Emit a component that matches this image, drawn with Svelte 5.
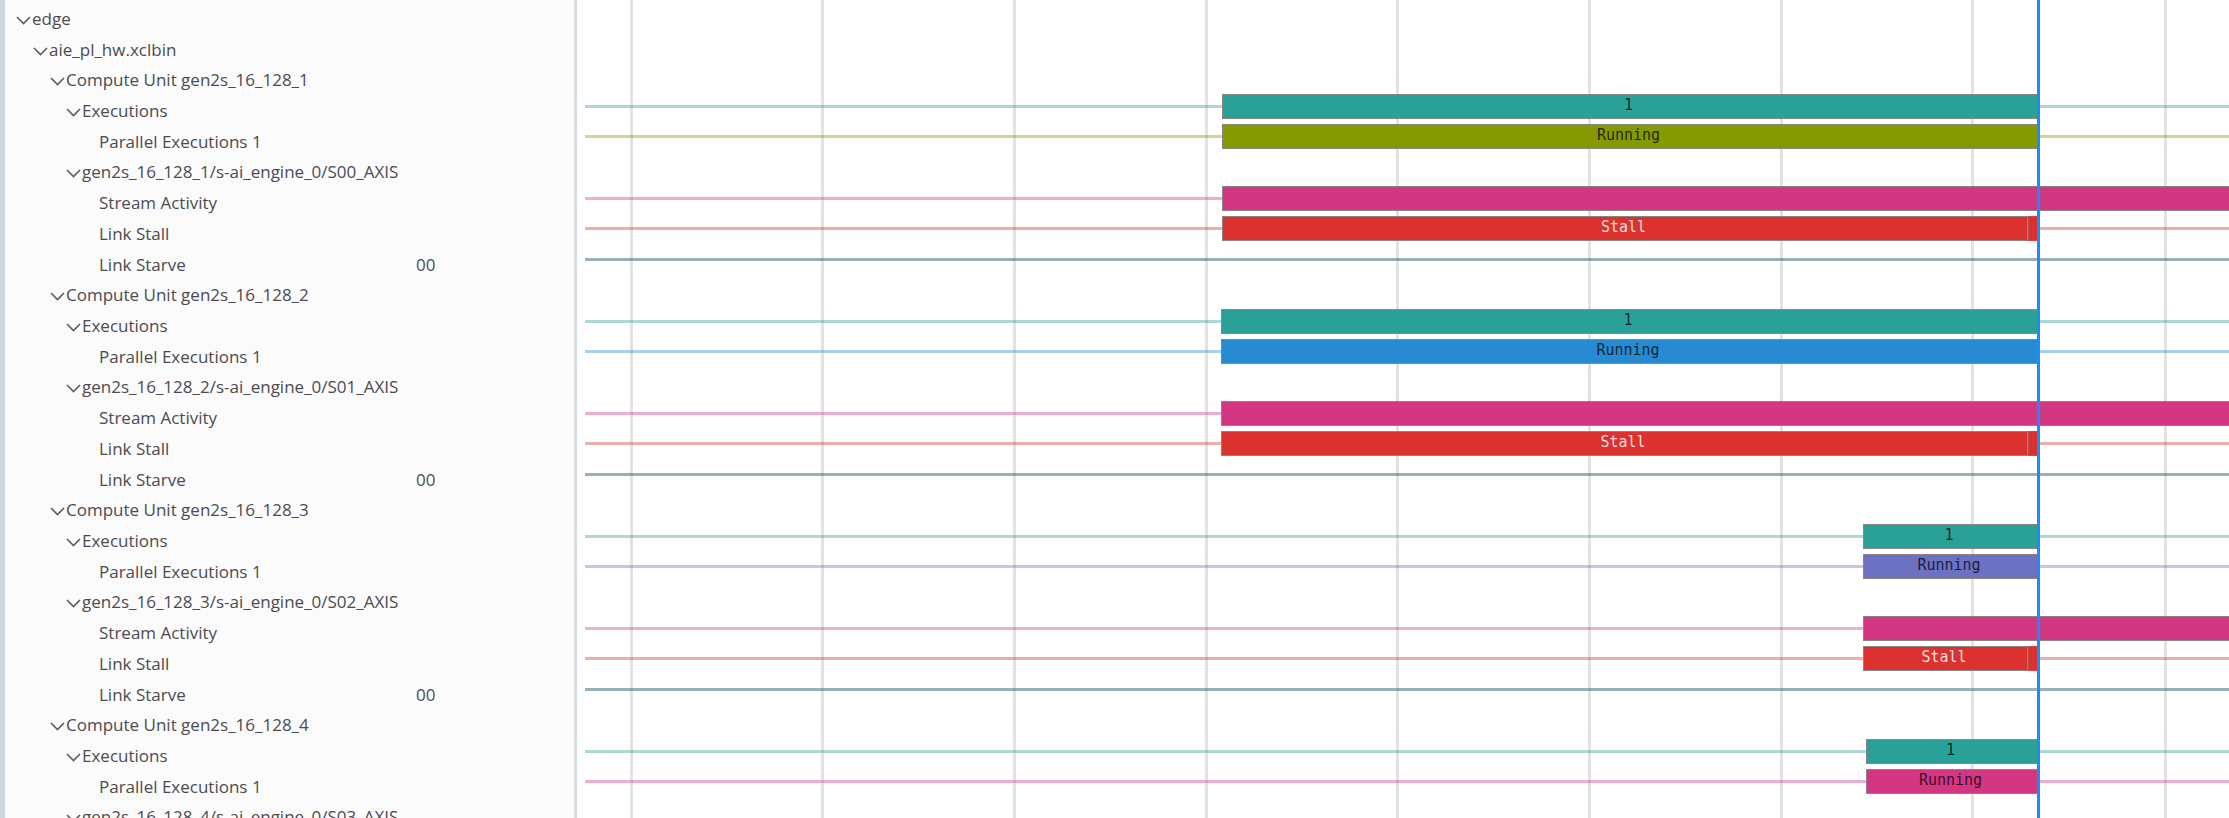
<script>
  const SPAN = 1644;
  const CURSOR = 1453;
  const pct = (t) => `${(t / SPAN) * 100}%`;

  const ticks = [46, 237, 429, 621, 812, 1004, 1196, 1387, 1580];

  const teal = '#2aa198';
  const pink = '#d33682';
  const red = '#dc322f';
  const slate = '#2f5f6b';

  const units = [
    { id: 1, port: 'S00', start: 637, color: '#859900' },
    { id: 2, port: 'S01', start: 636, color: '#268bd2' },
    { id: 3, port: 'S02', start: 1278, color: '#6c71c4' },
    { id: 4, port: 'S03', start: 1281, color: pink, partial: true },
  ];

  const groups = units.map(({ id, port, start, color, partial }) => {
    const name = `gen2s_16_128_${id}`;
    const rows = [
      { label: `Compute Unit ${name}`, level: 2, toggle: true },
      {
        label: 'Executions', level: 3, toggle: true, color: teal,
        bars: [{ from: start, to: CURSOR, text: '1' }],
      },
      {
        label: 'Parallel Executions 1', level: 4, color,
        bars: [{ from: start, to: CURSOR, text: 'Running' }],
      },
      { label: `${name}/s-ai_engine_0/${port}_AXIS`, level: 3, toggle: true },
    ];
    if (!partial) {
      rows.push(
        { label: 'Stream Activity', level: 4, color: pink, bars: [{ from: start, to: SPAN, open: true }] },
        {
          label: 'Link Stall', level: 4, color: red, light: true,
          bars: [
            { from: start, to: 1443, text: 'Stall' },
            { from: 1443, to: CURSOR, plain: true },
          ],
        },
        { label: 'Link Starve', level: 4, value: '00', color: slate, strong: true, bars: [] },
      );
    }
    return { id, rows };
  });

  const header = [
    { label: 'edge', level: 0, toggle: true },
    { label: 'aie_pl_hw.xclbin', level: 1, toggle: true },
  ];
</script>

{#snippet treeRow(row)}
  <div class="row level-{row.level}">
    {#if row.toggle}
      <button class="name" type="button" aria-expanded="true">
        <svg class="chevron" viewBox="0 0 15 9" aria-hidden="true">
          <path d="M1 1 L7.5 7.5 L14 1" />
        </svg>{row.label}
      </button>
    {:else}
      <span class="name leaf">{row.label}</span>
    {/if}
    {#if row.value}<span class="value">{row.value}</span>{/if}
  </div>
{/snippet}

<main class="viewer">
  <section class="tree">
    <div class="header">
      {#each header as row}{@render treeRow(row)}{/each}
    </div>
    {#each groups as group (group.id)}
      <div class="group">
        {#each group.rows as row}{@render treeRow(row)}{/each}
      </div>
    {/each}
  </section>

  <section class="timeline">
    {#each ticks as tick}
      <i class="tick" style:left={pct(tick)}></i>
    {/each}
    <div class="tracks">
      {#each groups as group (group.id)}
        <div class="group">
          {#each group.rows as row}
            <div class="track" class:signal={row.color} class:strong={row.strong} style:--color={row.color}>
              {#each row.bars ?? [] as bar}
                <span
                  class="bar"
                  class:open={bar.open}
                  class:plain={bar.plain}
                  class:light={row.light}
                  style:left={pct(bar.from)}
                  style:width={pct(bar.to - bar.from)}>{bar.text ?? ''}</span>
              {/each}
            </div>
          {/each}
        </div>
      {/each}
    </div>
    <i class="cursor" style:left={pct(CURSOR)}></i>
  </section>
</main>

<style>
  :global(body) {
    margin: 0;
    background: #fff;
  }

  .viewer {
    display: grid;
    grid-template-columns: 577px 1fr;
    height: 100vh;
    overflow: hidden;
    font: 17px/20px "Open Sans", "Noto Sans", sans-serif;
    color: #4b4b50;
  }

  .tree {
    box-sizing: border-box;
    padding-top: 4px;
    background: #fbfbfb;
    border-left: 5px solid #cfd4e0;
    border-right: 3px solid #d9dde5;
  }

  .header {
    display: grid;
    grid-template-rows: repeat(2, 1fr);
    height: 61px;
  }

  .group {
    display: grid;
    grid-template-rows: repeat(7, 1fr);
    height: 215px;
  }

  .row {
    display: grid;
    grid-template-columns: 411px 1fr;
    align-items: center;
    min-height: 0;
  }

  .name {
    display: flex;
    align-items: center;
    gap: 1px;
    margin: 0;
    padding: 0;
    border: 0;
    background: none;
    font: inherit;
    color: inherit;
    text-align: left;
    white-space: nowrap;
  }

  .level-0 .name { padding-left: 11px; }
  .level-1 .name { padding-left: 28px; }
  .level-2 .name { padding-left: 45px; }
  .level-3 .name { padding-left: 61px; }
  .level-4 .name { padding-left: 94px; }

  .chevron {
    width: 15px;
    height: 9px;
    margin-top: 3px;
    fill: none;
    stroke: #5c5c61;
    stroke-width: 1.6;
  }

  .timeline {
    position: relative;
    margin-left: 8px;
    overflow: hidden;
  }

  .tracks {
    padding-top: 60px;
  }

  .tick {
    position: absolute;
    top: 0;
    bottom: 0;
    width: 3px;
    margin-left: -1px;
    background: #e2e2e2;
  }

  .track {
    position: relative;
    display: flex;
    align-items: center;
    min-height: 0;
  }

  .signal::before {
    content: "";
    flex: 1;
    height: 3px;
    background: var(--color);
    opacity: 0.4;
  }

  .strong::before {
    opacity: 0.5;
  }

  .bar {
    position: absolute;
    box-sizing: border-box;
    height: 25px;
    padding-right: 3px;
    border: 1px solid #8a8580;
    background: var(--color);
    color: rgb(0 0 0 / 75%);
    font: 15px/20px "DejaVu Sans Mono", monospace;
    text-align: center;
    overflow: hidden;
  }

  .light {
    color: #f8dcdc;
  }

  .open {
    border-right: 0;
  }

  .plain {
    border-color: #e0403d;
    border-left-color: #b5534c;
  }

  .cursor {
    position: absolute;
    top: 0;
    bottom: 0;
    width: 3px;
    margin-left: -1px;
    background: #1a8cff;
  }
</style>
